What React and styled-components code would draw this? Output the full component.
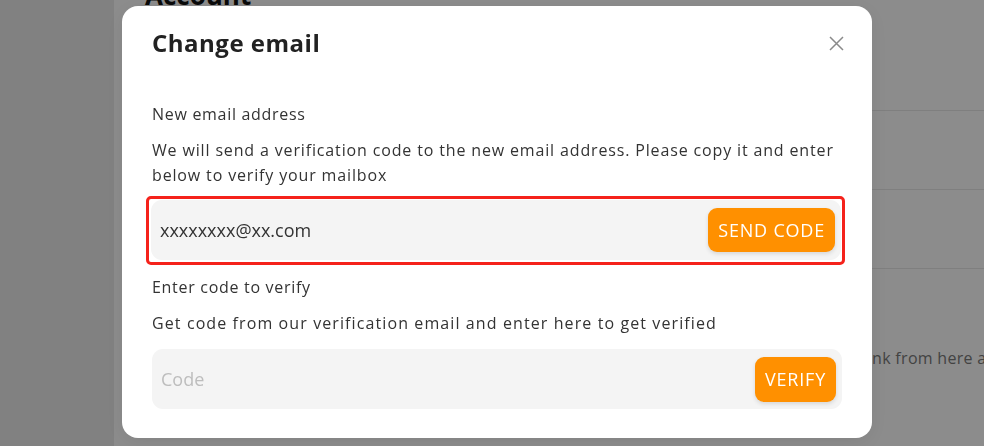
import React from "react"
import styled, { createGlobalStyle } from "styled-components"

const GlobalStyle = createGlobalStyle`
  html, body {
    margin: 0;
    padding: 0;
    width: 100%;
    height: 100%;
    overflow: hidden;
  }

  body {
    font-family: "Open Sans", "Liberation Sans", sans-serif;
    background: #ffffff;
  }

  * {
    box-sizing: border-box;
  }
`

const Page = styled.div`
  display: flex;
  width: 984px;
  height: 446px;
  overflow: hidden;
`

const Sidebar = styled.aside`
  flex: 0 0 114px;
  background: #ebebeb;
`

const Main = styled.main`
  flex: 1;
  background: #ffffff;
  padding-left: 31px;
  overflow: hidden;
`

const PageTitle = styled.h1`
  margin: -18px 0 0 0;
  font-size: 26px;
  line-height: 26px;
  font-weight: 700;
  color: #111;
`

const Section = styled.div`
  height: ${(p) => p.height}px;
  border-bottom: ${(p) => (p.divider ? "1px solid #e8e8e8" : "none")};
  margin-right: -300px;
`

const SectionText = styled.p`
  margin: 0;
  padding-top: ${(p) => p.top}px;
  font-size: 16px;
  line-height: 24px;
  letter-spacing: 0.3px;
  color: #7a7a7a;
  white-space: nowrap;
`

const Overlay = styled.div`
  position: fixed;
  inset: 0;
  background: rgba(0, 0, 0, 0.45);
  display: flex;
  align-items: flex-start;
  padding: 6px 0 0 122px;
`

const Modal = styled.div`
  width: 750px;
  height: 432px;
  background: #ffffff;
  border-radius: 16px;
  padding: 21px 30px 0 30px;
  display: flex;
  flex-direction: column;
  box-shadow: 0 4px 20px rgba(0, 0, 0, 0.08);
`

const Header = styled.div`
  display: flex;
  justify-content: space-between;
  align-items: center;
`

const Title = styled.h2`
  margin: 0;
  font-size: 24px;
  line-height: 32px;
  font-weight: 700;
  letter-spacing: 0.5px;
  color: #222;
`

const CloseButton = styled.button`
  border: none;
  background: none;
  padding: 0;
  width: 15px;
  height: 16px;
  margin-right: -2px;
  display: flex;
  align-items: center;
  cursor: pointer;
`

const Label = styled.div`
  margin-top: ${(p) => p.top}px;
  font-size: 16px;
  line-height: 24px;
  letter-spacing: 0.7px;
  color: #333;
`

const Hint = styled.p`
  margin: ${(p) => p.top}px 0 0 0;
  font-size: 16px;
  line-height: 25px;
  letter-spacing: ${(p) => p.spacing || 0.85}px;
  color: #333;
`

const Highlight = styled.div`
  margin: ${(p) => p.top}px -3px 0 -6px;
  border: 3px solid #f5221b;
  border-radius: 5px;
  padding: 1px 1px 2px 2px;
`

const Field = styled.div`
  display: flex;
  align-items: center;
  height: 60px;
  margin-top: ${(p) => p.top || 0}px;
  padding: 0 6px 0 9px;
  background: #f4f4f4;
  border-radius: 11px;
`

const Input = styled.input`
  flex: 1;
  min-width: 0;
  border: none;
  outline: none;
  background: transparent;
  font-family: "Open Sans", "Liberation Sans", sans-serif;
  font-size: 18px;
  color: #333;
  padding: 0;

  &::placeholder {
    color: #bdbdbd;
  }
`

const ActionButton = styled.button`
  height: ${(p) => p.h}px;
  padding: 0 ${(p) => p.px}px;
  border: none;
  border-radius: 9px;
  background: #ff9000;
  color: #ffffff;
  font-family: "Open Sans", "Liberation Sans", sans-serif;
  font-size: 18px;
  font-weight: 500;
  letter-spacing: 0.8px;
  box-shadow: 0 2px 4px rgba(0, 0, 0, 0.12);
  cursor: pointer;
`

const CloseIcon = () => (
  <svg width="15" height="15" viewBox="0 0 15 15">
    <path d="M1 1 L14 14 M14 1 L1 14" stroke="#8a8a8a" strokeWidth="1.5" fill="none" />
  </svg>
)

export default function App() {
  return (
    <>
      <GlobalStyle />
      <Page>
        <Sidebar />
        <Main>
          <PageTitle>Account</PageTitle>
          <Section height={103} divider />
          <Section height={79} divider />
          <Section height={79} divider />
          <Section height={120}>
            <SectionText top={77}>
              Invite all of your friends to join us and earn rewards together. Share your personal invitation link from here as well
            </SectionText>
          </Section>
        </Main>
      </Page>
      <Overlay>
        <Modal>
          <Header>
            <Title>Change email</Title>
            <CloseButton aria-label="Close">
              <CloseIcon />
            </CloseButton>
          </Header>
          <Label top={43}>New email address</Label>
          <Hint top={12}>
            We will send a verification code to the new email address. Please copy it and enter
            below to verify your mailbox
          </Hint>
          <Highlight top={8}>
            <Field>
              <Input defaultValue="xxxxxxxx@xx.com" />
              <ActionButton h={44} px={10}>SEND CODE</ActionButton>
            </Field>
          </Highlight>
          <Label top={10}>Enter code to verify</Label>
          <Hint top={12} spacing={1.1}>
            Get code from our verification email and enter here to get verified
          </Hint>
          <Field top={13}>
            <Input placeholder="Code" />
            <ActionButton h={45} px={10}>VERIFY</ActionButton>
          </Field>
        </Modal>
      </Overlay>
    </>
  )
}
